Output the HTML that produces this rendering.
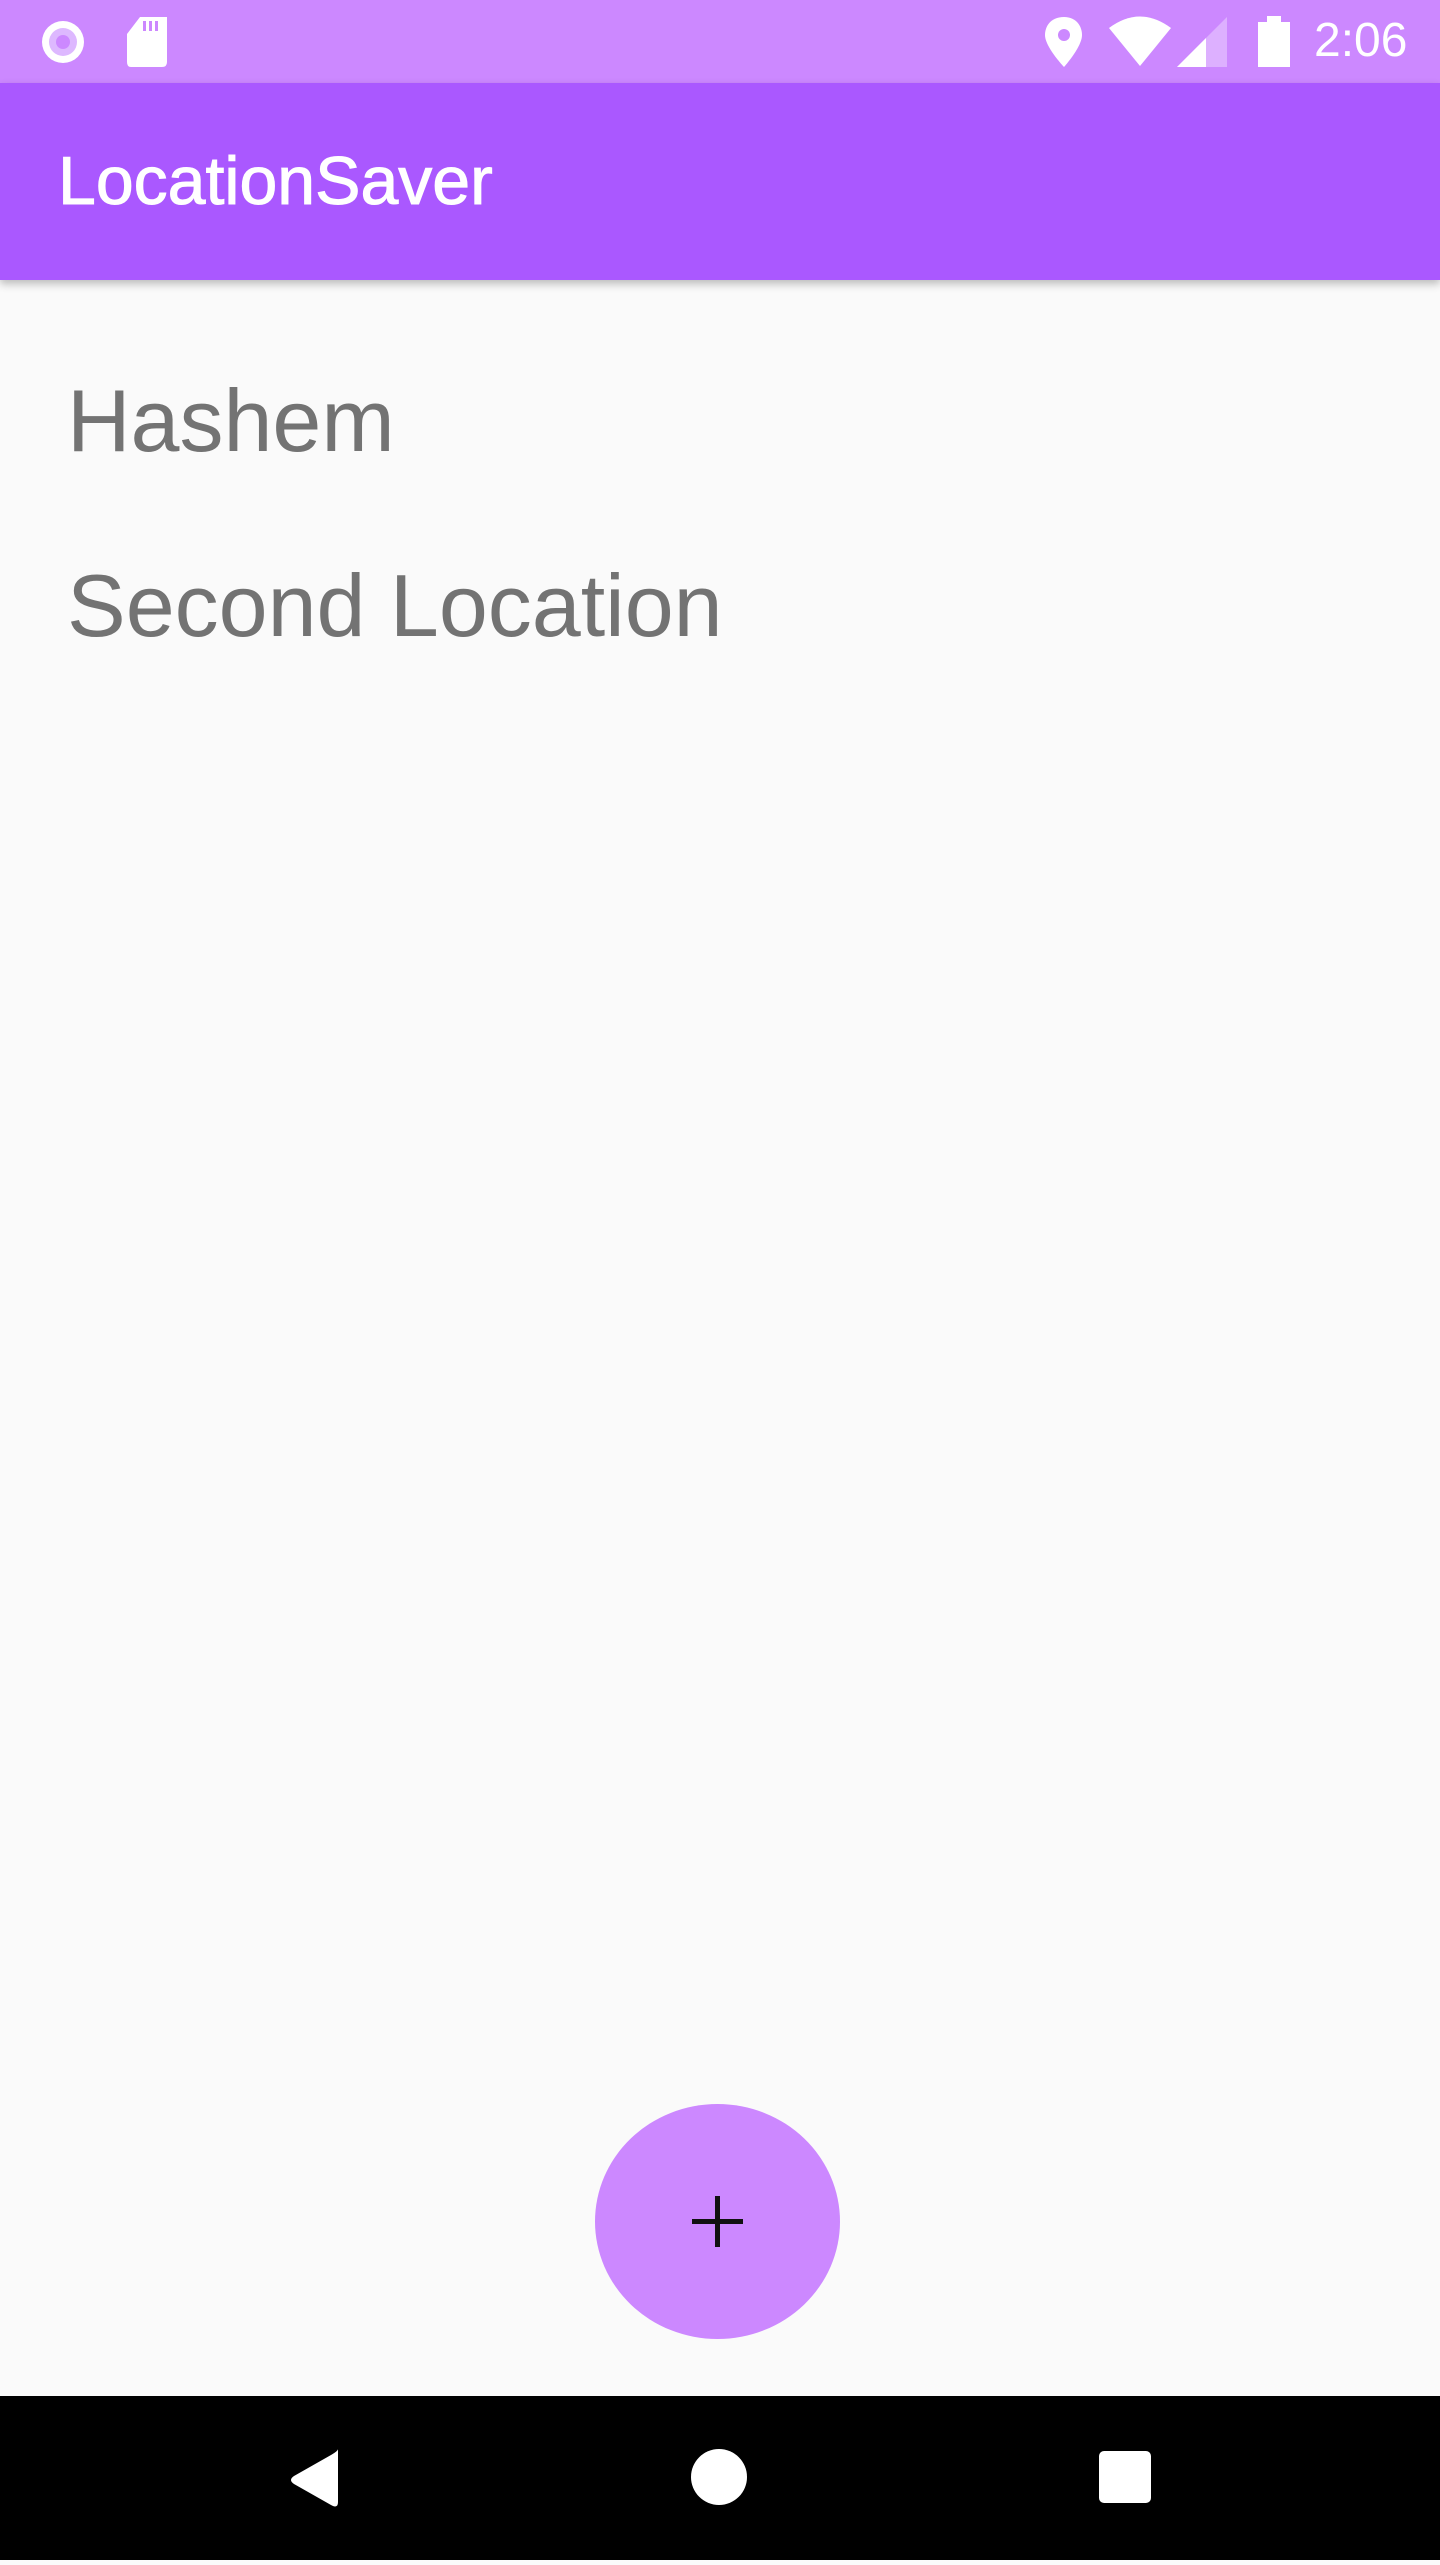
<!DOCTYPE html>
<html><head><style>
body{margin:0;width:1440px;height:2560px;background:#fafafa;font-family:"Liberation Sans",sans-serif;position:relative;overflow:hidden}
.sb{position:absolute;left:0;top:0;width:1440px;height:83px;background:#cc88ff}
.ab{position:absolute;left:0;top:83px;width:1440px;height:197px;background:#aa58ff;box-shadow:0 4px 8px rgba(0,0,0,.25)}
.t{position:absolute;left:58px;top:64px;color:#fff;font-size:68px;line-height:1;-webkit-text-stroke:1px #fff}
.item{position:absolute;left:67px;color:#737373;font-size:88px;line-height:1}
.fab{position:absolute;left:595px;top:2104px;width:245px;height:235px;border-radius:50%;background:#cc88ff}
.nav{position:absolute;left:0;top:2396px;width:1440px;height:164px;background:#000}
.time{position:absolute;left:1314px;top:17px;color:#fff;font-size:48px;line-height:1}
</style></head><body>
<div class="sb">
<svg style="position:absolute;left:0;top:0" width="1300" height="83">
<circle cx="63" cy="42" r="21" fill="#fff"/><circle cx="63" cy="42" r="14" fill="#ddb8ff"/><circle cx="63" cy="42" r="7" fill="#cc88ff"/>
<path d="M140 17 H167 V62 Q167 67 162 67 H131 Q127 67 127 62 V34 Z" fill="#fff"/>
<rect x="143" y="21" width="3" height="10" fill="#cc88ff"/><rect x="149" y="21" width="3" height="10" fill="#cc88ff"/><rect x="155" y="21" width="3" height="10" fill="#cc88ff"/>
<path d="M1064 17 C1050 17 1045 27 1045 35 C1045 47 1064 67 1064 67 C1064 67 1082 47 1082 35 C1082 27 1077 17 1064 17 Z" fill="#fff"/><circle cx="1064" cy="35" r="6" fill="#cc88ff"/>
<path d="M1109 28 Q1140 5 1171 28 L1140 66 Z" fill="#fff"/>
<path d="M1227 17 V67 H1177 Z" fill="#ddb0ff"/><path d="M1206 38 V67 H1177 Z" fill="#fff"/>
<rect x="1258" y="22" width="32" height="45" fill="#fff"/><rect x="1267" y="16" width="14" height="7" fill="#fff"/>
</svg>
<div class="time">2:06</div>
</div>
<div class="ab"><div class="t">LocationSaver</div></div>
<div class="item" style="top:377px">Hashem</div>
<div class="item" style="top:562px">Second Location</div>
<div class="fab"><svg width="245" height="235"><rect x="97" y="115" width="51" height="5" fill="#111"/><rect x="120" y="92" width="5" height="51" fill="#111"/></svg></div>
<div class="nav"><svg width="1440" height="164">
<path d="M338 53 V106 Q338 113 331 109 L294 88 Q288 84 294 80 L331 59 Q338 55 338 53 Z" fill="#fff"/>
<circle cx="719" cy="81" r="28" fill="#fff"/>
<rect x="1099" y="55" width="52" height="52" rx="5" fill="#fff"/>
</svg></div>
</body></html>
